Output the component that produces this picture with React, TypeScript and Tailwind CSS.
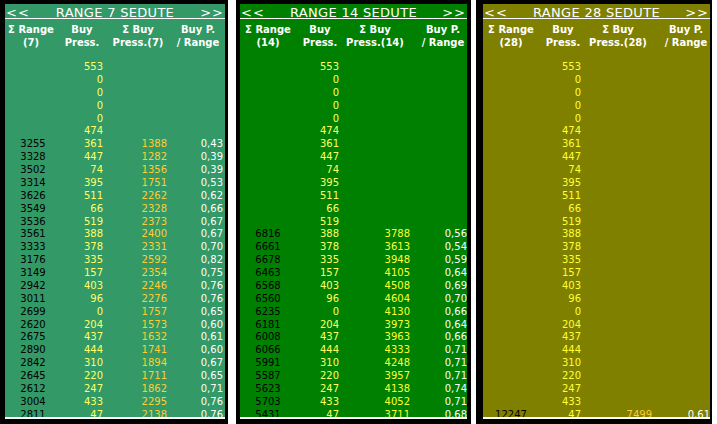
import * as React from "react"

type Row = [string?, string?, string?]

const buyPress = [
  "553", "0", "0", "0", "0", "474", "361", "447", "74", "395", "511", "66", "519", "388",
  "378", "335", "157", "403", "96", "0", "204", "437", "444", "310", "220", "247", "433", "47",
]

const range7: Row[] = [
  [], [], [], [], [], [],
  ["3255", "1388", "0,43"],
  ["3328", "1282", "0,39"],
  ["3502", "1356", "0,39"],
  ["3314", "1751", "0,53"],
  ["3626", "2262", "0,62"],
  ["3549", "2328", "0,66"],
  ["3536", "2373", "0,67"],
  ["3561", "2400", "0,67"],
  ["3333", "2331", "0,70"],
  ["3176", "2592", "0,82"],
  ["3149", "2354", "0,75"],
  ["2942", "2246", "0,76"],
  ["3011", "2276", "0,76"],
  ["2699", "1757", "0,65"],
  ["2620", "1573", "0,60"],
  ["2675", "1632", "0,61"],
  ["2890", "1741", "0,60"],
  ["2842", "1894", "0,67"],
  ["2645", "1711", "0,65"],
  ["2612", "1862", "0,71"],
  ["3004", "2295", "0,76"],
  ["2811", "2138", "0,76"],
]

const range14: Row[] = [
  [], [], [], [], [], [], [], [], [], [], [], [], [],
  ["6816", "3788", "0,56"],
  ["6661", "3613", "0,54"],
  ["6678", "3948", "0,59"],
  ["6463", "4105", "0,64"],
  ["6568", "4508", "0,69"],
  ["6560", "4604", "0,70"],
  ["6235", "4130", "0,66"],
  ["6181", "3973", "0,64"],
  ["6008", "3963", "0,66"],
  ["6066", "4333", "0,71"],
  ["5991", "4248", "0,71"],
  ["5587", "3957", "0,71"],
  ["5623", "4138", "0,74"],
  ["5703", "4052", "0,71"],
  ["5431", "3711", "0,68"],
]

const range28: Row[] = [
  ...Array.from({ length: 27 }, () => [] as Row),
  ["12247", "7499", "0,61"],
]

interface PanelProps {
  title: string
  n: number
  rows: Row[]
  bg: string
  widthClass: string
  headCols: [string, string, string, string]
  dataGrid: string
  buyColor: string
  sumColor: string
}

function Panel({ title, n, rows, bg, widthClass, headCols, dataGrid, buyColor, sumColor }: PanelProps) {
  return (
    <div className={`flex flex-col pt-[4px] ${widthClass}`}>
      <div className={`h-[413px] overflow-hidden ${bg}`}>
        {/* title bar */}
        <div className="flex h-[15px] items-start justify-between border-b border-white px-[1px] pt-[3px] text-[13px] leading-[11px] text-white">
          <span className="tracking-[1px]">&lt;&lt;</span>
          <span className="tracking-[0.3px]">{title}</span>
          <span className="tracking-[1px]">&gt;&gt;</span>
        </div>

        {/* column headers */}
        <div className="flex pt-[4px] text-[10px] font-bold leading-[13px] text-white">
          <div className={`text-center ${headCols[0]}`}>
            Σ Range
            <br />({n})
          </div>
          <div className={`text-center ${headCols[1]}`}>
            Buy
            <br />
            Press.
          </div>
          <div className={`text-center ${headCols[2]}`}>
            Σ Buy
            <br />
            Press.({n})
          </div>
          <div className={`text-center ${headCols[3]}`}>
            Buy P.
            <br />/ Range
          </div>
        </div>

        {/* data */}
        <div className="pt-[12px] text-[10px]">
          {rows.map((r, i) => (
            <div key={i} className={`grid h-[12.875px] leading-[12.875px] ${dataGrid}`}>
              <span className="text-center text-black">{r[0] ?? ""}</span>
              <span className={`text-right ${buyColor}`}>{buyPress[i]}</span>
              <span className={`text-right ${sumColor}`}>{r[1] ?? ""}</span>
              <span className="text-right text-white">{r[2] ?? ""}</span>
            </div>
          ))}
        </div>
      </div>
      <div className="h-[2px] bg-white" />
    </div>
  )
}

export default function App() {
  return (
    <div className="flex h-[424px] w-[717px] overflow-hidden bg-black font-['DejaVu_Sans',sans-serif]">
      <div className="w-[5px]" />
      <Panel
        title="RANGE 7 SEDUTE"
        n={7}
        rows={range7}
        bg="bg-[#339966]"
        widthClass="w-[220px]"
        headCols={["w-[52px]", "w-[50px]", "w-[62px]", "ml-[4px] w-[50px]"]}
        dataGrid="grid-cols-[56px_42px_64px_56px]"
        buyColor="text-[#ffff66]"
        sumColor="text-[#ffcc33]"
      />
      <div className="w-[3px]" />
      <div className="w-[8px] bg-white" />
      <div className="w-[4px]" />
      <Panel
        title="RANGE 14 SEDUTE"
        n={14}
        rows={range14}
        bg="bg-[#008000]"
        widthClass="w-[227px]"
        headCols={["w-[56px]", "w-[48px]", "w-[62px]", "ml-[13px] w-[48px]"]}
        dataGrid="grid-cols-[56px_43px_71px_57px]"
        buyColor="text-[#ffff66]"
        sumColor="text-[#ffff33]"
      />
      <div className="w-[4px]" />
      <div className="w-[5px] bg-white" />
      <div className="w-[7px]" />
      <Panel
        title="RANGE 28 SEDUTE"
        n={28}
        rows={range28}
        bg="bg-[#808000]"
        widthClass="w-[227px]"
        headCols={["w-[56px]", "w-[48px]", "w-[62px]", "ml-[13px] w-[48px]"]}
        dataGrid="grid-cols-[56px_42px_71px_58px]"
        buyColor="text-[#ffff33]"
        sumColor="text-[#ffcc33]"
      />
      <div className="w-[2px]" />
      <div className="flex-1 bg-white" />
    </div>
  )
}
